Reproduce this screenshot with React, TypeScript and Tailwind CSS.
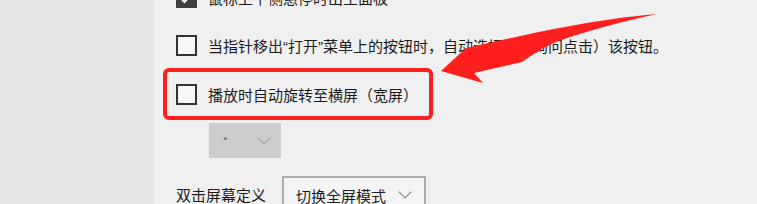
import React from "react";

const font = { fontFamily: '"Noto Sans CJK SC", "Noto Sans", sans-serif' };
const latin = { fontFamily: '"Liberation Sans", sans-serif' };

function Chevron({ color, w = 14, h = 8 }: { color: string; w?: number; h?: number }) {
  return (
    <svg width={w} height={h} viewBox="0 0 14 8" fill="none">
      <path d="M0.7 0.7 L7 7 L13.3 0.7" stroke={color} strokeWidth="1.2" />
    </svg>
  );
}

function Box({ checked = false }: { checked?: boolean }) {
  return checked ? (
    <div className="w-[21px] h-[21px] shrink-0 bg-[#3f3f3f] flex items-center justify-center">
      <svg width="15" height="12" viewBox="0 0 15 12" fill="none">
        <path d="M1.5 6 L5.5 10 L13.5 1.5" stroke="#ffffff" strokeWidth="2" />
      </svg>
    </div>
  ) : (
    <div className="w-[21px] h-[21px] shrink-0 border-2 border-[#333333] bg-[#f7f7f7]" />
  );
}

export default function App() {
  return (
    <div className="relative w-[757px] h-[204px] overflow-hidden flex bg-[#f0f0f0] text-[#1b1b1b]" style={font}>
      <div className="w-[154px] h-full bg-[#e6e6e6] shrink-0" />
      <div className="flex-1 flex flex-col pl-[9px] -mt-[13px]">
        <div className="shrink-0 flex items-center gap-[11px] pl-[13px] h-[21px]">
          <Box checked />
          <span className="text-[15px] leading-none whitespace-nowrap">鼠标上下侧悬停时出主面板</span>
        </div>
        <div className="shrink-0 flex items-center gap-[11px] pl-[13px] h-[21px] mt-[27px]">
          <Box />
          <span className="text-[15px] leading-none whitespace-nowrap">
            当指针移出<span style={latin}>“</span>打开<span style={latin}>”</span>菜单上的按钮时，自动选择（不询问点击）该按钮。
          </span>
        </div>
        <div className="shrink-0 mt-[12px] w-[270px] h-[52px] border-4 border-[#ff1e1e] rounded-[6px] flex items-center gap-[11px] pl-[9px]">
          <Box />
          <span className="text-[15px] leading-none whitespace-nowrap">播放时自动旋转至横屏（宽屏）</span>
        </div>
        <div className="shrink-0 mt-[3px] ml-[46px] w-[72px] h-[35px] bg-[#cccccc] flex items-center justify-between pl-[14px] pr-[10px]">
          <span className="text-[10px] text-[#555555] leading-none">*</span>
          <Chevron color="#a3a3a3" />
        </div>
        <div className="shrink-0 mt-[18px] flex items-start pl-[13px]">
          <span className="text-[15px] leading-none whitespace-nowrap mt-[11px] w-[106px]">双击屏幕定义</span>
          <div className="w-[144px] h-[38px] border-2 border-[#adadad] bg-[#f4f4f4] flex items-center justify-between pl-[12px] pr-[12px]">
            <span className="text-[15px] leading-none whitespace-nowrap">切换全屏模式</span>
            <Chevron color="#8a8a8a" />
          </div>
        </div>
      </div>
      <svg className="absolute left-0 top-0 pointer-events-none" width="757" height="204" viewBox="0 0 757 204">
        <path
          d="M441 71 L466 48 L525 35 C580 23 630 16 657 14 C625 21 585 31 556 42 C542 48 532 55 522 62 L474 73 L483 83 Z"
          fill="#ff1f1f"
        />
      </svg>
    </div>
  );
}
